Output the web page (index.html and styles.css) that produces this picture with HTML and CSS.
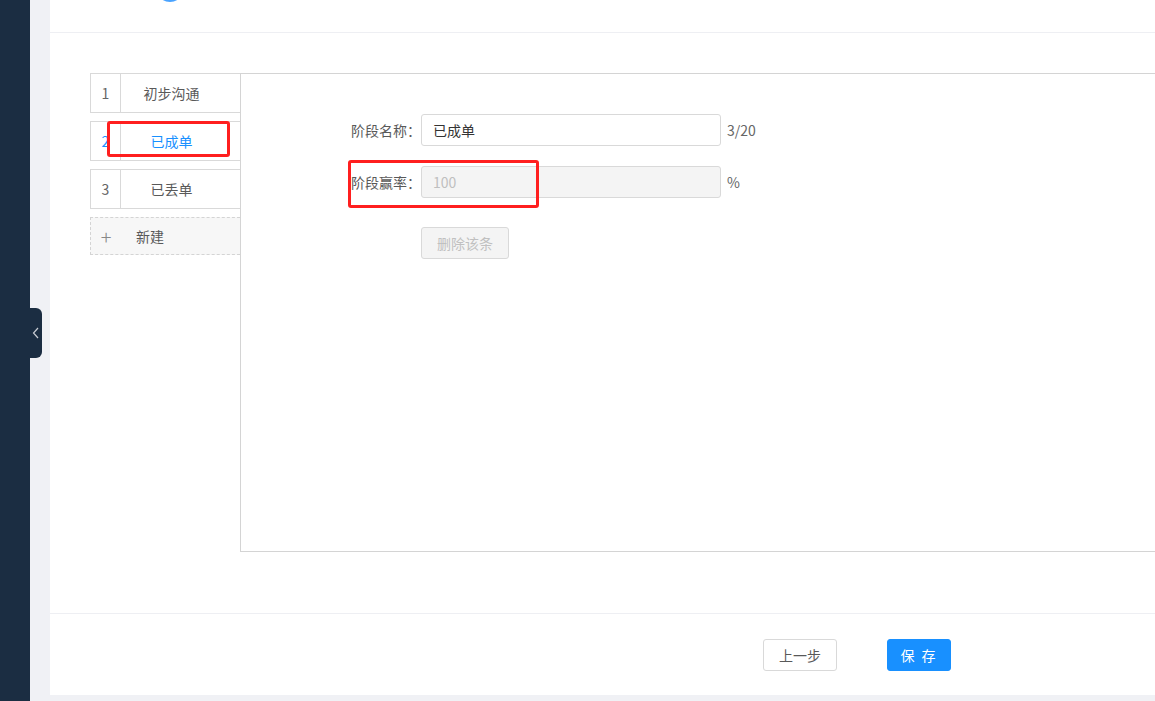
FILE: index.html
```html
<!DOCTYPE html>
<html lang="zh-CN">
<head>
    <meta charset="UTF-8">
    <title>阶段设置</title>
    <link rel="stylesheet" href="styles.css">
</head>
<body>
    <div class="sidebar">
        <div class="collapse-tab">
            <svg width="8" height="12" viewBox="0 0 8 12"><path d="M6 1 L1.5 6 L6 11" fill="none" stroke="#c8ccd3" stroke-width="1.2"/></svg>
        </div>
    </div>

    <div class="main">
        <div class="panel">
            <div class="panel-head">
                <span class="step-dot"></span>
            </div>

            <div class="panel-body">
                <div class="editor">
                    <div class="stage-list">
                        <div class="stage">
                            <span class="stage-no">1</span>
                            <span class="stage-name">初步沟通</span>
                        </div>
                        <div class="stage active">
                            <span class="stage-no">2</span>
                            <span class="stage-name">已成单</span>
                        </div>
                        <div class="stage">
                            <span class="stage-no">3</span>
                            <span class="stage-name">已丢单</span>
                        </div>
                        <div class="stage stage-new">
                            <span class="stage-no">+</span>
                            <span class="stage-name">新建</span>
                        </div>
                    </div>

                    <div class="stage-form">
                        <div class="form-row">
                            <label class="form-label">阶段名称：</label>
                            <input class="form-input" type="text" value="已成单">
                            <span class="form-suffix">3/20</span>
                        </div>
                        <div class="form-row">
                            <label class="form-label">阶段赢率：</label>
                            <input class="form-input" type="text" value="100" disabled>
                            <span class="form-suffix">%</span>
                        </div>
                        <div class="form-row">
                            <span class="form-label"></span>
                            <button class="btn btn-disabled" disabled>删除该条</button>
                        </div>
                    </div>

                    <div class="mark mark-stage"></div>
                    <div class="mark mark-rate"></div>
                </div>
            </div>

            <div class="panel-foot">
                <button class="btn btn-default">上一步</button>
                <button class="btn btn-primary">保 存</button>
            </div>
        </div>
    </div>
</body>
</html>
```

FILE: styles.css
```css
html, body {
    margin: 0;
    height: 100%;
}
body {
    display: flex;
    font-family: "Noto Sans CJK SC", "Noto Sans", sans-serif;
    font-size: 14px;
    color: #595959;
    background-color: #f0f1f5;
    overflow: hidden;
}
.sidebar {
    position: relative;
    width: 30px;
    flex-shrink: 0;
    background-color: #1b2d42;
}
.collapse-tab {
    position: absolute;
    left: 30px;
    top: 308px;
    width: 12px;
    height: 50px;
    background-color: #1b2d42;
    border-radius: 0 6px 6px 0;
    display: flex;
    align-items: center;
    justify-content: center;
    z-index: 2;
}
.main {
    flex: 1;
    padding: 0 0 6px 20px;
    min-width: 0;
}
.panel {
    height: 100%;
    background-color: #fff;
    display: flex;
    flex-direction: column;
    overflow: hidden;
}
.panel-head {
    position: relative;
    height: 32px;
    flex-shrink: 0;
    border-bottom: 1px solid #eeeff3;
}
.step-dot {
    position: absolute;
    left: 106px;
    top: -26px;
    width: 24px;
    height: 24px;
    border: 2px solid #4aa3ff;
    border-radius: 50%;
    box-sizing: content-box;
}
.panel-body {
    padding: 40px 0 0 40px;
    height: 581px;
    flex-shrink: 0;
    border-bottom: 1px solid #eeeff3;
    box-sizing: border-box;
}
.editor {
    position: relative;
    display: flex;
    width: 1200px;
}
.stage-list {
    width: 150px;
    flex-shrink: 0;
}
.stage {
    display: flex;
    align-items: center;
    height: 40px;
    border: 1px solid #d9d9d9;
    border-right: none;
    margin-bottom: 8px;
    box-sizing: border-box;
    background-color: #fff;
}
.stage-no {
    width: 30px;
    height: 100%;
    display: flex;
    align-items: center;
    justify-content: center;
    border-right: 1px solid #d9d9d9;
    box-sizing: border-box;
    color: #666;
}
.stage-name {
    flex: 1;
    text-align: center;
    padding-right: 18px;
    color: #595959;
}
.stage.active .stage-name,
.stage.active .stage-no {
    color: #1890ff;
}
.stage-new {
    height: 38px;
    border: 1px dashed #d4d4d4;
    border-right: none;
    background-color: #f7f7f7;
}
.stage-new .stage-no {
    border-right: none;
    font-size: 20px;
    font-weight: 300;
    color: #888;
}
.stage-new .stage-name {
    flex: none;
    padding: 0 0 0 15px;
    text-align: left;
}
.stage-form {
    flex: 1;
    height: 479px;
    border: 1px solid #d4d4d4;
    padding: 40px 0 0 109px;
    box-sizing: border-box;
}
.form-row {
    display: flex;
    align-items: center;
    margin-bottom: 20px;
}
.form-label {
    width: 71px;
    text-align: right;
    flex-shrink: 0;
}
.form-input {
    width: 300px;
    height: 32px;
    padding: 0 11px;
    box-sizing: border-box;
    border: 1px solid #d9d9d9;
    border-radius: 3px;
    font-family: inherit;
    font-size: 14px;
    color: #333;
    outline: none;
}
.form-input:disabled {
    background-color: #f4f4f4;
    color: #bfbfbf;
}
.form-suffix {
    margin-left: 6px;
    color: #666;
}
.btn {
    height: 32px;
    padding: 0 15px;
    font-family: inherit;
    font-size: 14px;
    border-radius: 3px;
    border: 1px solid #d9d9d9;
    background-color: #fff;
    color: #595959;
    white-space: nowrap;
    cursor: pointer;
}
.btn-disabled {
    width: 88px;
    background-color: #f4f4f4;
    color: #c0c0c0;
    margin-top: 9px;
}
.panel-foot {
    display: flex;
    gap: 50px;
    padding: 25px 0 0 713px;
}
.btn-default {
    width: 74px;
}
.btn-primary {
    width: 64px;
    padding: 0;
    background-color: #1890ff;
    border-color: #1890ff;
    color: #fff;
    letter-spacing: 2px;
}
.mark {
    position: absolute;
    border: 3px solid #ff1f1f;
    border-radius: 3px;
    box-sizing: border-box;
}
.mark-stage {
    left: 17px;
    top: 48px;
    width: 123px;
    height: 36px;
}
.mark-rate {
    left: 258px;
    top: 87px;
    width: 191px;
    height: 48px;
}
```
